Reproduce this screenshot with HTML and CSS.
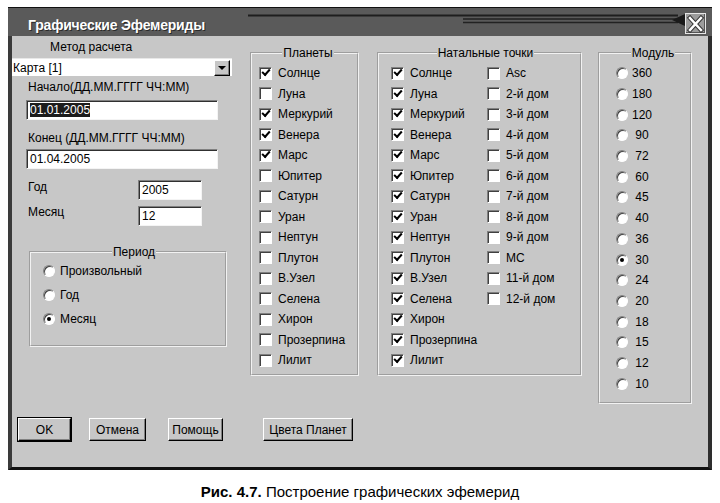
FILE: index.html
```html
<!DOCTYPE html>
<html lang="ru">
<head>
  <meta charset="UTF-8">
  <title>Графические Эфемериды</title>
  <link rel="stylesheet" href="styles.css">
</head>
<body>
  <div class="window">
    <div class="titlebar">
      <span class="title">Графические Эфемериды</span>
      <svg class="title-deco" width="437" height="28" viewBox="0 0 437 28">
        <line x1="0" y1="7.5" x2="430" y2="7.5" stroke="#1e1e1e" stroke-width="2"/>
        <line x1="215" y1="11" x2="430" y2="11" stroke="#222" stroke-width="1.5"/>
        <line x1="215" y1="14.5" x2="430" y2="14.5" stroke="#222" stroke-width="1.5"/>
        <polygon points="424,12 437,6 437,18" fill="#1a1a1a"/>
      </svg>
      <span class="close">
        <svg width="19" height="18" viewBox="0 0 19 18">
          <path d="M4 3 L15 15 M15 3 L4 15" stroke="#333" stroke-width="4.5" stroke-linecap="square"/>
          <path d="M4 3 L15 15 M15 3 L4 15" stroke="#fff" stroke-width="2.5" stroke-linecap="square"/>
        </svg>
      </span>
    </div>

    <div class="client">
      <div class="main">
        <div class="left-col">
          <div class="label method">Метод расчета</div>
          <div class="combo">
            <span class="combo-text">Карта [1]</span>
            <span class="combo-btn"><span class="arrow"></span></span>
          </div>
          <div class="label start-label">Начало(ДД.ММ.ГГГГ ЧЧ:ММ)</div>
          <div class="field wide first"><span class="selected">01.01.2005</span></div>
          <div class="label end-label">Конец (ДД.ММ.ГГГГ ЧЧ:ММ)</div>
          <div class="field wide second">01.04.2005</div>
          <div class="pair year">
            <span class="label pair-label">Год</span>
            <div class="field short">2005</div>
          </div>
          <div class="pair month">
            <span class="label pair-label">Месяц</span>
            <div class="field short">12</div>
          </div>
          <fieldset class="group period">
            <legend>Период</legend>
            <div class="opt"><span class="radio"></span>Произвольный</div>
            <div class="opt"><span class="radio"></span>Год</div>
            <div class="opt"><span class="radio on"></span>Месяц</div>
          </fieldset>
        </div>

        <fieldset class="group planets">
          <legend>Планеты</legend>
          <div class="list">
            <div class="row"><span class="box on"></span>Солнце</div>
            <div class="row"><span class="box"></span>Луна</div>
            <div class="row"><span class="box on"></span>Меркурий</div>
            <div class="row"><span class="box on"></span>Венера</div>
            <div class="row"><span class="box on"></span>Марс</div>
            <div class="row"><span class="box"></span>Юпитер</div>
            <div class="row"><span class="box"></span>Сатурн</div>
            <div class="row"><span class="box"></span>Уран</div>
            <div class="row"><span class="box"></span>Нептун</div>
            <div class="row"><span class="box"></span>Плутон</div>
            <div class="row"><span class="box"></span>В.Узел</div>
            <div class="row"><span class="box"></span>Селена</div>
            <div class="row"><span class="box"></span>Хирон</div>
            <div class="row"><span class="box"></span>Прозерпина</div>
            <div class="row"><span class="box"></span>Лилит</div>
          </div>
        </fieldset>

        <fieldset class="group natal">
          <legend>Натальные точки</legend>
          <div class="cols">
            <div class="list natal-left">
              <div class="row"><span class="box on"></span>Солнце</div>
              <div class="row"><span class="box on"></span>Луна</div>
              <div class="row"><span class="box on"></span>Меркурий</div>
              <div class="row"><span class="box on"></span>Венера</div>
              <div class="row"><span class="box on"></span>Марс</div>
              <div class="row"><span class="box on"></span>Юпитер</div>
              <div class="row"><span class="box on"></span>Сатурн</div>
              <div class="row"><span class="box on"></span>Уран</div>
              <div class="row"><span class="box on"></span>Нептун</div>
              <div class="row"><span class="box on"></span>Плутон</div>
              <div class="row"><span class="box on"></span>В.Узел</div>
              <div class="row"><span class="box on"></span>Селена</div>
              <div class="row"><span class="box on"></span>Хирон</div>
              <div class="row"><span class="box on"></span>Прозерпина</div>
              <div class="row"><span class="box on"></span>Лилит</div>
            </div>
            <div class="list natal-right">
              <div class="row"><span class="box"></span>Asc</div>
              <div class="row"><span class="box"></span>2-й дом</div>
              <div class="row"><span class="box"></span>3-й дом</div>
              <div class="row"><span class="box"></span>4-й дом</div>
              <div class="row"><span class="box"></span>5-й дом</div>
              <div class="row"><span class="box"></span>6-й дом</div>
              <div class="row"><span class="box"></span>7-й дом</div>
              <div class="row"><span class="box"></span>8-й дом</div>
              <div class="row"><span class="box"></span>9-й дом</div>
              <div class="row"><span class="box"></span>MC</div>
              <div class="row"><span class="box"></span>11-й дом</div>
              <div class="row"><span class="box"></span>12-й дом</div>
            </div>
          </div>
        </fieldset>

        <fieldset class="group module">
          <legend>Модуль</legend>
          <div class="list">
            <div class="mrow"><span class="radio"></span><span class="num">360</span></div>
            <div class="mrow"><span class="radio"></span><span class="num">180</span></div>
            <div class="mrow"><span class="radio"></span><span class="num">120</span></div>
            <div class="mrow"><span class="radio"></span><span class="num">90</span></div>
            <div class="mrow"><span class="radio"></span><span class="num">72</span></div>
            <div class="mrow"><span class="radio"></span><span class="num">60</span></div>
            <div class="mrow"><span class="radio"></span><span class="num">45</span></div>
            <div class="mrow"><span class="radio"></span><span class="num">40</span></div>
            <div class="mrow"><span class="radio"></span><span class="num">36</span></div>
            <div class="mrow"><span class="radio on"></span><span class="num">30</span></div>
            <div class="mrow"><span class="radio"></span><span class="num">24</span></div>
            <div class="mrow"><span class="radio"></span><span class="num">20</span></div>
            <div class="mrow"><span class="radio"></span><span class="num">18</span></div>
            <div class="mrow"><span class="radio"></span><span class="num">15</span></div>
            <div class="mrow"><span class="radio"></span><span class="num">12</span></div>
            <div class="mrow"><span class="radio"></span><span class="num">10</span></div>
          </div>
        </fieldset>
      </div>

      <div class="buttons">
        <button class="btn btn-ok">OK</button>
        <button class="btn btn-cancel">Отмена</button>
        <button class="btn btn-help">Помощь</button>
        <button class="btn btn-colors">Цвета Планет</button>
      </div>
    </div>
  </div>

  <p class="caption"><b>Рис. 4.7.</b> Построение графических эфемерид</p>
</body>
</html>
```

FILE: styles.css
```css
body {
  margin: 0;
  background: #ffffff;
  font-family: "Liberation Sans", Arial, sans-serif;
  font-size: 12px;
  color: #000;
}
.window {
  width: 704px;
  margin: 7px 0 0 8px;
  border-top: 1px solid #111;
}
/* Title bar */
.titlebar {
  height: 28px;
  background: #5a5a5a;
  display: flex;
  align-items: flex-start;
}
.title {
  color: #fff;
  font-weight: bold;
  font-size: 14px;
  letter-spacing: -0.2px;
  line-height: 16px;
  margin: 9px 0 0 20px;
  text-shadow: 1px 1px 0 #2a2a2a;
}
.title-deco {
  margin-left: auto;
  flex: none;
}
.close {
  width: 21px;
  height: 21px;
  margin: 5px 6px 0 0;
  box-sizing: border-box;
  background: #9c9c9c;
  border: 1px solid #e6e6e6;
  box-shadow: inset -1px -1px 0 #555;
  display: flex;
  align-items: center;
  justify-content: center;
  flex: none;
}
/* Client area */
.client {
  height: 431px;
  background: #c7c7c7;
  border-left: 4px solid #3a3a3a;
  border-right: 4px solid #2e2e2e;
  border-bottom: 3px solid #111;
}
.main {
  display: flex;
  align-items: flex-start;
  padding-top: 4px;
}
.label {
  line-height: 14px;
  white-space: nowrap;
}
.left-col {
  width: 221px;
  flex: none;
}
.method {
  margin-left: 38px;
}
.combo {
  display: flex;
  align-items: center;
  width: 220px;
  height: 18px;
  margin-top: 4px;
  box-sizing: border-box;
  background: #fff;
  border-top: 1px solid #e8e8e8;
}
.combo-text {
  flex: 1;
  padding-left: 1px;
}
.combo-btn {
  width: 16px;
  height: 16px;
  margin-right: 2px;
  box-sizing: border-box;
  background: #c7c7c7;
  border: 1px solid;
  border-color: #fff #000 #000 #fff;
  box-shadow: inset -1px -1px 0 #808080;
  display: flex;
  align-items: center;
  justify-content: center;
}
.arrow {
  width: 0;
  height: 0;
  border-left: 4px solid transparent;
  border-right: 4px solid transparent;
  border-top: 4px solid #000;
}
.start-label {
  margin: 4px 0 0 16px;
}
.end-label {
  margin: 11px 0 0 16px;
}
.field {
  height: 20px;
  box-sizing: border-box;
  background: #fff;
  border: 1px solid;
  border-color: #808080 #f4f4f4 #f4f4f4 #808080;
  box-shadow: inset 1px 1px 0 #303030;
  padding-left: 3px;
  line-height: 18px;
}
.wide {
  width: 192px;
  margin-left: 14px;
}
.first {
  margin-top: 6px;
}
.second {
  margin-top: 4px;
}
.selected {
  background: #1c1c1c;
  color: #fff;
}
.pair {
  display: flex;
  align-items: flex-start;
}
.year {
  margin-top: 11px;
}
.month {
  margin-top: 6px;
}
.pair-label {
  width: 110px;
  margin-left: 16px;
  flex: none;
}
.month .pair-label {
  margin-top: -1px;
}
.short {
  width: 64px;
}
/* Group boxes */
.group {
  margin: 0;
  padding: 0;
  min-width: 0;
  box-sizing: border-box;
  border: 2px groove #f2f2f2;
}
.group legend {
  margin: 0 auto;
  padding: 0 1px;
  line-height: 14px;
}
.period {
  width: 198px;
  margin: 19px 0 0 17px;
  padding: 0 0 14px 12px;
}
.opt {
  height: 24px;
  display: flex;
  align-items: center;
}
.opt .radio {
  margin-right: 5px;
}
.planets {
  width: 109px;
  height: 330px;
  margin: 6px 0 0 17px;
  padding: 3px 0 0 7px;
}
.natal {
  width: 205px;
  height: 330px;
  margin: 6px 0 0 18px;
  padding: 3px 0 0 12px;
}
.module {
  width: 94px;
  height: 358px;
  margin: 6px 0 0 16px;
  padding: 3px 0 0 16px;
}
.list {
  display: flex;
  flex-direction: column;
}
.cols {
  display: flex;
}
.natal-left {
  width: 96px;
}
.row {
  height: 20.5px;
  display: flex;
  align-items: center;
  white-space: nowrap;
}
.mrow {
  height: 20.7px;
  display: flex;
  align-items: center;
}
.num {
  width: 22px;
  margin-left: 3px;
  text-align: center;
}
/* Check boxes and radio buttons */
.box {
  width: 13px;
  height: 13px;
  margin-right: 6px;
  flex: none;
  box-sizing: border-box;
  background: #fff;
  border: 1px solid;
  border-color: #808080 #fff #fff #808080;
  box-shadow: inset 1px 1px 0 #404040;
  display: flex;
  align-items: center;
  justify-content: center;
}
.box.on::after {
  content: "";
  width: 6px;
  height: 3px;
  margin: -3px 0 0 1px;
  border-left: 2px solid #000;
  border-bottom: 2px solid #000;
  transform: rotate(-48deg);
}
.radio {
  width: 12px;
  height: 12px;
  flex: none;
  box-sizing: border-box;
  border-radius: 50%;
  background: #fff;
  border: 1px solid;
  border-color: #808080 #fff #fff #808080;
  box-shadow: inset 1px 1px 0 #404040;
  display: flex;
  align-items: center;
  justify-content: center;
}
.radio.on::after {
  content: "";
  width: 4px;
  height: 4px;
  border-radius: 50%;
  background: #000;
}
/* Buttons */
.buttons {
  display: flex;
  margin-top: 14px;
}
.btn {
  height: 23px;
  box-sizing: border-box;
  padding: 0;
  background: #c7c7c7;
  border: 1px solid;
  border-color: #fff #000 #000 #fff;
  box-shadow: inset -1px -1px 0 #808080;
  font-family: "Liberation Sans", Arial, sans-serif;
  font-size: 12px;
  color: #000;
}
.btn-ok {
  width: 53px;
  margin-left: 6px;
  box-shadow: 0 0 0 1px #000, inset -1px -1px 0 #808080;
}
.btn-cancel {
  width: 57px;
  margin-left: 18px;
}
.btn-help {
  width: 55px;
  margin-left: 22px;
}
.btn-colors {
  width: 90px;
  margin-left: 40px;
}
/* Caption */
.caption {
  margin: 13px 0 0;
  text-align: center;
  font-size: 15px;
  line-height: 18px;
}
```
